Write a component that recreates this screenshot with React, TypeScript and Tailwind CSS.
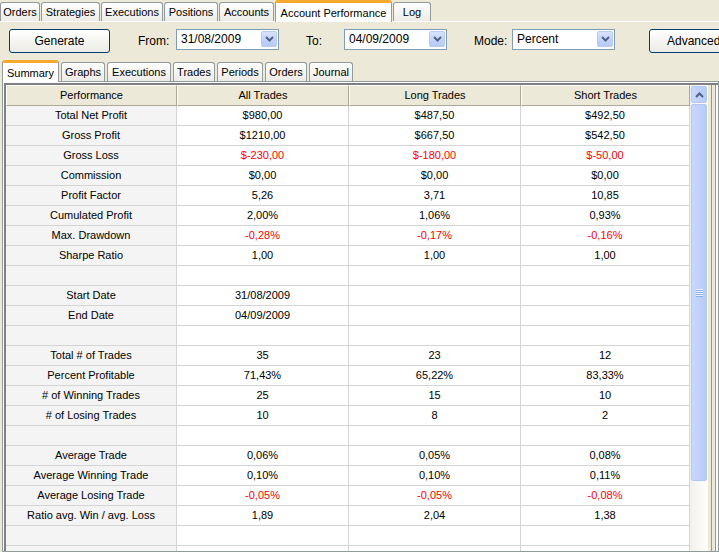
import React from 'react';

type Cell = { v: string; red?: boolean };
type Row = { label: string; cells: Cell[] };

const c = (v: string, red = false): Cell => ({ v, red });
const three = (a: string, b: string, d: string, red = false) => [c(a, red), c(b, red), c(d, red)];
const blank = (): Row => ({ label: '', cells: three('', '', '') });

const rows: Row[] = [
  { label: 'Total Net Profit', cells: three('$980,00', '$487,50', '$492,50') },
  { label: 'Gross Profit', cells: three('$1210,00', '$667,50', '$542,50') },
  { label: 'Gross Loss', cells: three('$-230,00', '$-180,00', '$-50,00', true) },
  { label: 'Commission', cells: three('$0,00', '$0,00', '$0,00') },
  { label: 'Profit Factor', cells: three('5,26', '3,71', '10,85') },
  { label: 'Cumulated Profit', cells: three('2,00%', '1,06%', '0,93%') },
  { label: 'Max. Drawdown', cells: three('-0,28%', '-0,17%', '-0,16%', true) },
  { label: 'Sharpe Ratio', cells: three('1,00', '1,00', '1,00') },
  blank(),
  { label: 'Start Date', cells: three('31/08/2009', '', '') },
  { label: 'End Date', cells: three('04/09/2009', '', '') },
  blank(),
  { label: 'Total # of Trades', cells: three('35', '23', '12') },
  { label: 'Percent Profitable', cells: three('71,43%', '65,22%', '83,33%') },
  { label: '# of Winning Trades', cells: three('25', '15', '10') },
  { label: '# of Losing Trades', cells: three('10', '8', '2') },
  blank(),
  { label: 'Average Trade', cells: three('0,06%', '0,05%', '0,08%') },
  { label: 'Average Winning Trade', cells: three('0,10%', '0,10%', '0,11%') },
  { label: 'Average Losing Trade', cells: three('-0,05%', '-0,05%', '-0,08%', true) },
  { label: 'Ratio avg. Win / avg. Loss', cells: three('1,89', '2,04', '1,38') },
  blank(),
  { label: 'Max. consec. Winners', cells: three('10', '10', '10') },
];

const topTabs = [
  { t: 'Orders', w: 'w-[40px]' },
  { t: 'Strategies', w: 'w-[59px]' },
  { t: 'Executions', w: 'w-[62px]' },
  { t: 'Positions', w: 'w-[54px]' },
  { t: 'Accounts', w: 'w-[55px]' },
  { t: 'Account Performance', w: 'w-[117px]', sel: true },
  { t: 'Log', w: 'w-[38px]' },
];

const subTabs = [
  { t: 'Summary', w: 'w-[57px]', sel: true },
  { t: 'Graphs', w: 'w-[44px]' },
  { t: 'Executions', w: 'w-[64px]' },
  { t: 'Trades', w: 'w-[42px]' },
  { t: 'Periods', w: 'w-[46px]' },
  { t: 'Orders', w: 'w-[42px]' },
  { t: 'Journal', w: 'w-[44px]' },
];

function Tab({ t, w, sel }: { t: string; w: string; sel?: boolean }) {
  if (sel) {
    return (
      <div className={`${w} h-[22px] -mb-px relative z-10 shrink-0 flex items-start justify-center pt-[2px] bg-white border-x border-[#919b9c] border-t-[3px] border-t-[#f7a92f] rounded-t-[3px]`}>
        {t}
      </div>
    );
  }
  return (
    <div className={`${w} h-[19px] shrink-0 flex items-center justify-center bg-gradient-to-b from-white to-[#ecebe6] border-x border-t border-[#919b9c] rounded-t-[3px]`}>
      {t}
    </div>
  );
}

function XpButton({ label, className }: { label: string; className: string }) {
  return (
    <div className={`${className} h-[24px] shrink-0 flex items-center rounded-[3px] border border-[#003c74] bg-gradient-to-b from-white to-[#ecebe4] text-[12px]`}>
      {label}
    </div>
  );
}

function Combo({ value, className }: { value: string; className: string }) {
  return (
    <div className={`${className} h-[21px] shrink-0 -mt-[4px] flex items-center bg-white border border-[#7f9db9] pl-[4px] pr-[1px] text-[12px]`}>
      <span className="flex-1">{value}</span>
      <div className="w-[16px] h-[16px] rounded-[2px] bg-gradient-to-b from-[#d6e2fd] to-[#b4c9f6] border border-[#b9cbf3] flex items-center justify-center">
        <svg width="9" height="6" viewBox="0 0 9 6">
          <path d="M1 1 L4.5 4.5 L8 1" stroke="#4d6185" strokeWidth="2" fill="none" />
        </svg>
      </div>
    </div>
  );
}

export default function App() {
  return (
    <div className="w-[719px] h-[552px] overflow-hidden bg-[#ece9d8] text-[11px] text-black font-['Liberation_Sans',Arial,sans-serif] flex flex-col">
      {/* main tabs */}
      <div className="h-[21px] flex items-end gap-px shrink-0">
        {topTabs.map((tb) => (
          <Tab key={tb.t} {...tb} />
        ))}
      </div>
      <div className="border-t border-[#fcfcfe] flex-1 flex flex-col min-h-0">
        {/* toolbar */}
        <div className="h-[37px] flex items-center shrink-0 pt-[1px] overflow-hidden">
          <XpButton label="Generate" className="ml-[9px] w-[101px] justify-center" />
          <span className="ml-[28px] w-[38px] shrink-0 text-[12px]">From:</span>
          <Combo value="31/08/2009" className="w-[103px]" />
          <span className="ml-[27px] w-[38px] shrink-0 text-[12px]">To:</span>
          <Combo value="04/09/2009" className="w-[103px]" />
          <span className="ml-[27px] w-[38px] shrink-0 text-[12px]">Mode:</span>
          <Combo value="Percent" className="w-[103px]" />
          <XpButton label="Advanced" className="ml-[34px] w-[90px] pl-[17px]" />
        </div>
        {/* sub tabs */}
        <div className="h-[22px] flex items-end gap-[2px] pl-[2px] shrink-0">
          {subTabs.map((tb) => (
            <Tab key={tb.t} {...tb} />
          ))}
        </div>
        {/* panel */}
        <div className="flex-1 min-h-0 ml-[2px] border border-[#919b9c] bg-[#fcfcfe] pl-[1px] pt-[1px] flex">
          <div className="flex-1 min-h-0 border-l-2 border-t-2 border-[#808080] flex overflow-hidden">
            <div className="w-[684px] shrink-0 bg-white overflow-hidden">
              <div className="grid grid-cols-[171px_172px_172px_169px] h-[21px]">
                {['Performance', 'All Trades', 'Long Trades', 'Short Trades'].map((h) => (
                  <div key={h} className="flex items-center justify-center bg-[#ece9d8] border-t border-l border-white border-r border-r-[#aca899] border-b border-b-[#aca899]">
                    {h}
                  </div>
                ))}
              </div>
              {rows.map((r, i) => (
                <div key={i} className="grid grid-cols-[171px_172px_172px_169px] h-[20px]">
                  <div className="flex items-center justify-center bg-[#f4f4f4] border-r border-b border-[#d4d4d4]">{r.label}</div>
                  {r.cells.map((cell, j) => (
                    <div
                      key={j}
                      className={`flex items-center justify-center border-r border-b border-[#d4d4d4] ${cell.red ? 'text-[#ff0000]' : ''}`}
                    >
                      {cell.v}
                    </div>
                  ))}
                </div>
              ))}
            </div>
            {/* scrollbar */}
            <div className="w-[18px] shrink-0 bg-gradient-to-r from-[#f3f1ec] to-[#fefefb] flex flex-col p-px gap-[1px]">
              <div className="h-[17px] rounded-[2px] bg-gradient-to-r from-[#c8d8fd] to-[#b7cbf8] border border-[#b4c8f6] flex items-center justify-center">
                <svg width="9" height="6" viewBox="0 0 9 6">
                  <path d="M1 5 L4.5 1.5 L8 5" stroke="#4d6185" strokeWidth="2" fill="none" />
                </svg>
              </div>
              <div className="h-[377px] rounded-[2px] bg-gradient-to-r from-[#c8d8fd] to-[#b7cbf8] border border-[#b4c8f6] flex flex-col items-center justify-center gap-[1px]">
                {[0, 1, 2, 3].map((k) => (
                  <div key={k} className="w-[7px] h-[1px] bg-[#eef3fe] shadow-[0_1px_0_#8caef0]" />
                ))}
              </div>
            </div>
            <div className="w-[3px] shrink-0 bg-[#ece9d8]" />
            <div className="w-px shrink-0 bg-[#8a9aa8]" />
            <div className="w-[3px] shrink-0 bg-[#ece9d8]" />
            <div className="w-px shrink-0 bg-[#8a9aa8]" />
          </div>
        </div>
      </div>
    </div>
  );
}
